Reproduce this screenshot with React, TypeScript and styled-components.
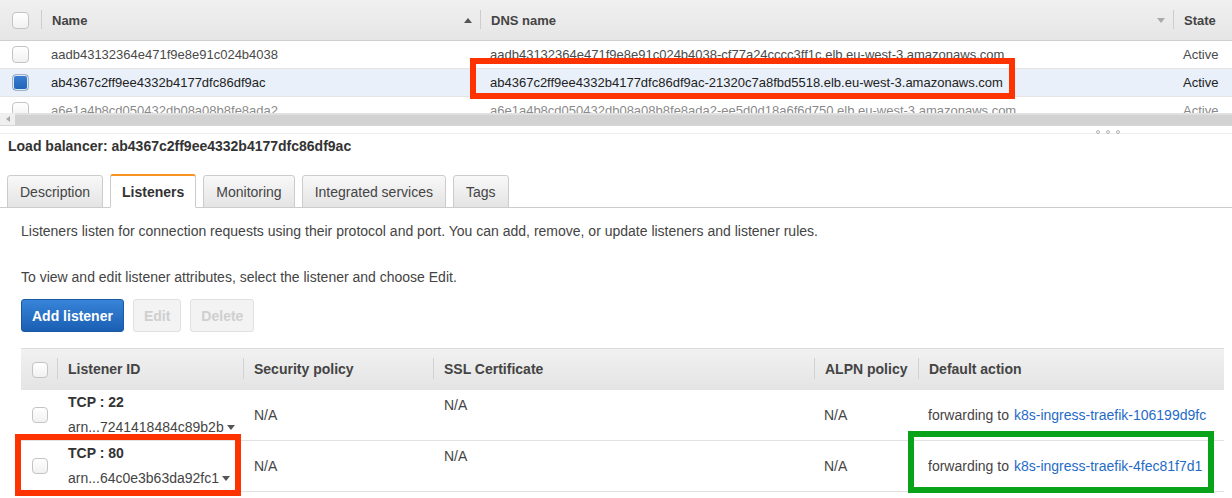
import React from "react";
import styled, { createGlobalStyle, css } from "styled-components";

const Global = createGlobalStyle`
  html, body { margin: 0; padding: 0; background: #fff; }
  body { font-family: "Liberation Sans", Arial, sans-serif; color: #444; }
  * { box-sizing: border-box; }
`;

const Root = styled.div`
  position: relative;
  width: 1232px;
  height: 498px;
  overflow: hidden;
`;

/* ---------- top table ---------- */
const TopTable = styled.div`
  height: 113px;
  overflow: hidden;
`;

const TopGrid = styled.div<{ $header?: boolean; $selected?: boolean; $faded?: boolean }>`
  display: grid;
  grid-template-columns: 41px 439px 693px 1fr;
  height: ${(p) => (p.$header ? "41px" : "28px")};
  border-bottom: 1px solid ${(p) => (p.$header ? "#cfcfcf" : "#e4e4e4")};
  background: ${(p) =>
    p.$header ? "linear-gradient(#f0f0f0, #e6e6e6)" : p.$selected ? "#e9f0fa" : "#fff"};
  color: ${(p) => (p.$selected ? "#222" : p.$faded ? "#8a8a8a" : "#4a4a4a")};
  font-size: 13px;
`;

const HeadCell = styled.div<{ $sep?: boolean }>`
  position: relative;
  display: flex;
  align-items: center;
  justify-content: space-between;
  padding: 0 8px 0 11px;
  font-weight: bold;
  color: #444;
  ${(p) =>
    p.$sep &&
    css`
      &::before {
        content: "";
        position: absolute;
        left: 0;
        top: 10px;
        bottom: 11px;
        width: 1px;
        background: #cdcdcd;
      }
    `}
`;

const BoxCell = styled.div<{ $pad: number }>`
  display: flex;
  align-items: center;
  padding-left: ${(p) => p.$pad}px;
`;

const Cell = styled.div`
  display: flex;
  align-items: center;
  padding-left: 10px;
  white-space: nowrap;
  overflow: hidden;
`;

const Check = styled.span<{ $checked?: boolean; $size?: number }>`
  display: inline-block;
  width: ${(p) => p.$size ?? 17}px;
  height: ${(p) => p.$size ?? 17}px;
  border-radius: 4px;
  border: 1px solid ${(p) => (p.$checked ? "#9fb2c8" : "#c4c4c4")};
  background: ${(p) =>
    p.$checked ? "linear-gradient(#3b7fd3, #1f63b8)" : "linear-gradient(#ffffff, #f1f1f1)"};
  box-shadow: ${(p) => (p.$checked ? "inset 0 0 0 1px #dfe7f1" : "none")};
`;

const Scrollbar = styled.div`
  display: flex;
  height: 12px;
`;

const ScrollBtn = styled.div`
  width: 15px;
  display: flex;
  align-items: center;
  justify-content: center;
  background: #efefef;
`;

const ScrollThumb = styled.div`
  flex: 1;
  background: linear-gradient(#e0e0e0 0, #e0e0e0 2px, #d2d2d2 2px);
`;

const Splitter = styled.div`
  height: 9px;
  border-top: 1px solid #d6d6d6;
  border-bottom: 1px solid #ececec;
  display: flex;
  justify-content: flex-end;
  align-items: flex-end;
  gap: 6px;
  padding-right: 112px;
`;

const Dot = styled.span`
  width: 4px;
  height: 4px;
  margin-bottom: -1px;
  border-radius: 50%;
  border: 1px solid #b8b8b8;
  background: #f4f4f4;
`;

/* ---------- detail pane ---------- */
const Heading = styled.h2`
  margin: 0;
  padding: 4px 8px 0;
  font-size: 14px;
  line-height: 17px;
  font-weight: bold;
  color: #333;
`;

const TabStrip = styled.div`
  margin-top: 20px;
  height: 33px;
  display: flex;
  align-items: flex-end;
  gap: 7px;
  padding-left: 7px;
  border-bottom: 1px solid #cccccc;
`;

const Tab = styled.div<{ $active?: boolean }>`
  height: 33px;
  margin-bottom: -1px;
  padding: 0 12px;
  display: flex;
  align-items: center;
  font-size: 14px;
  color: #444;
  border: 1px solid #cccccc;
  border-radius: 3px 3px 0 0;
  background: linear-gradient(#f8f8f8, #e4e4e4);
  ${(p) =>
    p.$active &&
    css`
      height: 34px;
      padding: 0 11px;
      background: #fff;
      border-top: 2px solid #f7931e;
      border-bottom-color: #fff;
      font-weight: bold;
      color: #333;
    `}
`;

const Content = styled.div`
  padding: 0 8px 0 21px;
`;

const Para = styled.p<{ $mt: number }>`
  margin: ${(p) => p.$mt}px 0 0;
  font-size: 14px;
  line-height: 17px;
  color: #444;
`;

const ButtonBar = styled.div`
  margin-top: 13px;
  display: flex;
  gap: 9px;
`;

const Button = styled.button<{ $primary?: boolean }>`
  height: 33px;
  padding: 0 10px;
  border-radius: 3px;
  font-family: inherit;
  font-size: 14px;
  font-weight: bold;
  ${(p) =>
    p.$primary
      ? css`
          color: #fff;
          border: 1px solid #1b5aa3;
          background: linear-gradient(#3784d8, #1a5fb3);
        `
      : css`
          color: #cfcfcf;
          border: 1px solid #e0e0e0;
          background: #f3f3f3;
        `}
`;

const LTable = styled.div`
  margin-top: 16px;
`;

const LGrid = styled.div<{ $header?: boolean }>`
  display: grid;
  grid-template-columns: 36px 186px 190px 381px 104px 1fr;
  height: ${(p) => (p.$header ? "42px" : "51px")};
  font-size: 14px;
  ${(p) =>
    p.$header
      ? css`
          border-top: 1px solid #dcdcdc;
          background: linear-gradient(#f1f1f1, #e4e4e4);
        `
      : css`
          border-bottom: 1px solid #e2e2e2;
        `}
`;

const LHead = styled.div<{ $sep?: boolean }>`
  position: relative;
  display: flex;
  align-items: center;
  padding: 0 0 2px 11px;
  font-weight: bold;
  color: #444;
  ${(p) =>
    p.$sep &&
    css`
      &::before {
        content: "";
        position: absolute;
        left: 0;
        top: 9px;
        bottom: 11px;
        width: 1px;
        background: #d2d2d2;
      }
    `}
`;

const LCell = styled.div<{ $top?: boolean; $pad?: number }>`
  display: flex;
  align-items: ${(p) => (p.$top ? "flex-start" : "center")};
  padding: ${(p) => (p.$top ? "7px" : "0")} 0 0 ${(p) => p.$pad ?? 11}px;
  color: #444;
  white-space: nowrap;
`;

const IdCell = styled.div`
  display: flex;
  flex-direction: column;
  gap: 8px;
  padding: 4px 0 0 11px;
  line-height: 17px;
  color: #444;
`;

const Proto = styled.span`
  font-weight: bold;
  color: #333;
`;

const Arn = styled.span`
  display: inline-flex;
  align-items: center;
  gap: 3px;
`;

const Link = styled.a`
  color: #1f6bc7;
  text-decoration: none;
  margin-left: 5px;
`;

const Mark = styled.div<{ $color: string }>`
  position: absolute;
  border: 6px solid ${(p) => p.$color};
  pointer-events: none;
`;

const Tri = ({ up, color }: { up?: boolean; color: string }) => (
  <svg width="8" height="5" viewBox="0 0 8 5">
    <path d={up ? "M0 5 L4 0 L8 5 Z" : "M0 0 L8 0 L4 5 Z"} fill={color} />
  </svg>
);

const topRows = [
  {
    name: "aadb43132364e471f9e8e91c024b4038",
    dns: "aadb43132364e471f9e8e91c024b4038-cf77a24cccc3ff1c.elb.eu-west-3.amazonaws.com",
  },
  {
    name: "ab4367c2ff9ee4332b4177dfc86df9ac",
    dns: "ab4367c2ff9ee4332b4177dfc86df9ac-21320c7a8fbd5518.elb.eu-west-3.amazonaws.com",
    selected: true,
  },
  {
    name: "a6e1a4b8cd050432db08a08b8fe8ada2",
    dns: "a6e1a4b8cd050432db08a08b8fe8ada2-ee5d0d18a6f6d750.elb.eu-west-3.amazonaws.com",
    faded: true,
  },
];

const listeners = [
  { proto: "TCP : 22", arn: "arn...7241418484c89b2b", target: "k8s-ingress-traefik-106199d9fc" },
  { proto: "TCP : 80", arn: "arn...64c0e3b63da92fc1", target: "k8s-ingress-traefik-4fec81f7d1" },
];

export default function App() {
  return (
    <Root>
      <Global />
      <TopTable>
        <TopGrid $header>
          <BoxCell $pad={12}>
            <Check />
          </BoxCell>
          <HeadCell $sep>
            <span>Name</span>
            <Tri up color="#555" />
          </HeadCell>
          <HeadCell $sep>
            <span>DNS name</span>
            <Tri color="#aaa" />
          </HeadCell>
          <HeadCell $sep>State</HeadCell>
        </TopGrid>
        {topRows.map((r) => (
          <TopGrid key={r.name} $selected={r.selected} $faded={r.faded}>
            <BoxCell $pad={12}>
              <Check $checked={r.selected} />
            </BoxCell>
            <Cell>{r.name}</Cell>
            <Cell>{r.dns}</Cell>
            <Cell>Active</Cell>
          </TopGrid>
        ))}
      </TopTable>
      <Scrollbar>
        <ScrollBtn>
          <svg width="4" height="6" viewBox="0 0 4 6">
            <path d="M4 0 L0 3 L4 6 Z" fill="#aaa" />
          </svg>
        </ScrollBtn>
        <ScrollThumb />
      </Scrollbar>
      <Splitter>
        <Dot />
        <Dot />
        <Dot />
      </Splitter>

      <Heading>Load balancer: ab4367c2ff9ee4332b4177dfc86df9ac</Heading>
      <TabStrip>
        <Tab>Description</Tab>
        <Tab $active>Listeners</Tab>
        <Tab>Monitoring</Tab>
        <Tab>Integrated services</Tab>
        <Tab>Tags</Tab>
      </TabStrip>
      <Content>
        <Para $mt={15}>
          Listeners listen for connection requests using their protocol and port. You can add,
          remove, or update listeners and listener rules.
        </Para>
        <Para $mt={29}>
          To view and edit listener attributes, select the listener and choose Edit.
        </Para>
        <ButtonBar>
          <Button $primary>Add listener</Button>
          <Button disabled>Edit</Button>
          <Button disabled>Delete</Button>
        </ButtonBar>
        <LTable>
          <LGrid $header>
            <BoxCell $pad={11}>
              <Check $size={16} />
            </BoxCell>
            <LHead $sep>Listener ID</LHead>
            <LHead $sep>Security policy</LHead>
            <LHead $sep>SSL Certificate</LHead>
            <LHead $sep>ALPN policy</LHead>
            <LHead $sep>Default action</LHead>
          </LGrid>
          {listeners.map((l) => (
            <LGrid key={l.proto}>
              <BoxCell $pad={11}>
                <Check $size={16} />
              </BoxCell>
              <IdCell>
                <Proto>{l.proto}</Proto>
                <Arn>
                  {l.arn}
                  <Tri color="#555" />
                </Arn>
              </IdCell>
              <LCell>N/A</LCell>
              <LCell $top>N/A</LCell>
              <LCell $pad={10}>N/A</LCell>
              <LCell $pad={10}>
                forwarding to
                <Link href="#">{l.target}</Link>
              </LCell>
            </LGrid>
          ))}
        </LTable>
      </Content>

      <Mark $color="#ff3300" style={{ left: 470, top: 58, width: 545, height: 41 }} />
      <Mark $color="#ff3300" style={{ left: 15, top: 434, width: 226, height: 62 }} />
      <Mark $color="#08a318" style={{ left: 908, top: 431, width: 306, height: 62 }} />
    </Root>
  );
}
